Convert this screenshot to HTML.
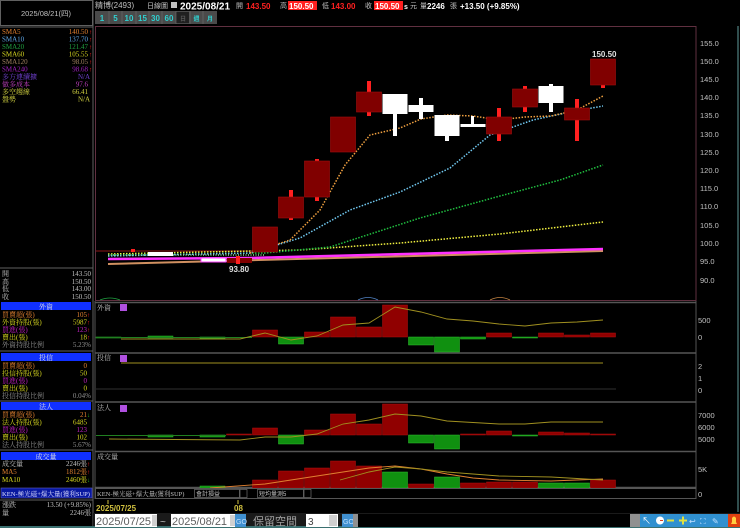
<!DOCTYPE html>
<html><head><meta charset="utf-8"><style>
html,body{margin:0;padding:0;background:#000;}
svg{display:block;font-family:"Liberation Sans","Noto Sans CJK TC",sans-serif;}
</style></head><body>
<svg width="740" height="528" viewBox="0 0 740 528" xmlns="http://www.w3.org/2000/svg">
<rect width="740" height="528" fill="#000"/>
<rect x="0.5" y="0.5" width="92" height="25" fill="#000" stroke="#606060"/>
<text x="46" y="16" fill="#c0c0c0" font-size="7.5" text-anchor="middle">2025/08/21(四)</text>
<line x1="0" y1="27" x2="93" y2="27" stroke="#606060"/>
<line x1="93" y1="0" x2="93" y2="528" stroke="#606060"/>
<g font-size="7" font-family="Liberation Serif,Noto Serif CJK SC,serif">
<text x="2" y="34" fill="#e08030">SMA5</text><text x="88" y="34" fill="#e08030" text-anchor="end">140.50</text>
<text x="2" y="41.5" fill="#60a8e8">SMA10</text><text x="88" y="41.5" fill="#60a8e8" text-anchor="end">137.70</text>
<text x="2" y="49" fill="#20a040">SMA20</text><text x="88" y="49" fill="#20a040" text-anchor="end">121.47</text>
<text x="2" y="56.5" fill="#d8d820">SMA60</text><text x="88" y="56.5" fill="#d8d820" text-anchor="end">105.55</text>
<text x="2" y="64" fill="#a08060">SMA120</text><text x="88" y="64" fill="#a08060" text-anchor="end">98.05</text>
<text x="2" y="71.5" fill="#a020c0">SMA240</text><text x="88" y="71.5" fill="#a020c0" text-anchor="end">98.68</text>
<text x="2" y="79" fill="#7040d0">多方連續擴</text><text x="90" y="79" fill="#7040d0" text-anchor="end">N/A</text>
<text x="2" y="86.5" fill="#c040c0">做多成本</text><text x="88" y="86.5" fill="#c040c0" text-anchor="end">97.6</text>
<text x="2" y="94" fill="#d0d040">多空趨線</text><text x="88" y="94" fill="#d0d040" text-anchor="end">66.41</text>
<text x="2" y="101.5" fill="#d0d040">盤勢</text><text x="90" y="101.5" fill="#d0d040" text-anchor="end">N/A</text>
</g>
<g fill="#ff2020" font-size="6">
<text x="89" y="34">↑</text><text x="89" y="41.5">↑</text><text x="89" y="49">↑</text><text x="89" y="56.5">↑</text><text x="89" y="64">↑</text><text x="89" y="71.5">↑</text>
</g>
<line x1="0" y1="268" x2="93" y2="268" stroke="#606060"/>
<g font-size="7" fill="#c0c0c0" font-family="Liberation Serif,Noto Serif CJK SC,serif">
<text x="2" y="276">開</text><text x="91" y="276" text-anchor="end">143.50</text>
<text x="2" y="284">高</text><text x="91" y="284" text-anchor="end">150.50</text>
<text x="2" y="291">低</text><text x="91" y="291" text-anchor="end">143.00</text>
<text x="2" y="299">收</text><text x="91" y="299" text-anchor="end">150.50</text>
</g>
<g font-size="7" font-family="Liberation Serif,Noto Serif CJK SC,serif">
<rect x="1" y="302" width="90" height="8" fill="#1030ff"/><text x="46" y="309" fill="#e0e0e0" text-anchor="middle">外資</text>
<text x="2" y="317" fill="#e08030">買賣超(張)</text><text x="87" y="317" fill="#e08030" text-anchor="end">105</text>
<text x="2" y="324.5" fill="#d8d820">外資持股(張)</text><text x="87" y="324.5" fill="#d8d820" text-anchor="end">5987</text>
<text x="2" y="332" fill="#c020c0">買進(張)</text><text x="87" y="332" fill="#c020c0" text-anchor="end">123</text>
<text x="2" y="339.5" fill="#d8d820">賣出(張)</text><text x="87" y="339.5" fill="#d8d820" text-anchor="end">18</text>
<text x="2" y="347" fill="#909090">外資持股比例</text><text x="91" y="347" fill="#909090" text-anchor="end">5.23%</text>
<line x1="0" y1="351" x2="93" y2="351" stroke="#606060"/>
<rect x="1" y="353" width="90" height="8" fill="#1030ff"/><text x="46" y="360" fill="#e0e0e0" text-anchor="middle">投信</text>
<text x="2" y="368" fill="#e08030">買賣超(張)</text><text x="87" y="368" fill="#e08030" text-anchor="end">0</text>
<text x="2" y="375.5" fill="#d8d820">投信持股(張)</text><text x="87" y="375.5" fill="#d8d820" text-anchor="end">50</text>
<text x="2" y="383" fill="#c020c0">買進(張)</text><text x="87" y="383" fill="#c020c0" text-anchor="end">0</text>
<text x="2" y="390.5" fill="#d8d820">賣出(張)</text><text x="87" y="390.5" fill="#d8d820" text-anchor="end">0</text>
<text x="2" y="398" fill="#909090">投信持股比例</text><text x="91" y="398" fill="#909090" text-anchor="end">0.04%</text>
<line x1="0" y1="401" x2="93" y2="401" stroke="#606060"/>
<rect x="1" y="402" width="90" height="8" fill="#1030ff"/><text x="46" y="409" fill="#e0e0e0" text-anchor="middle">法人</text>
<text x="2" y="417" fill="#e08030">買賣超(張)</text><text x="87" y="417" fill="#e08030" text-anchor="end">21</text>
<text x="2" y="424.5" fill="#d8d820">法人持股(張)</text><text x="87" y="424.5" fill="#d8d820" text-anchor="end">6485</text>
<text x="2" y="432" fill="#c020c0">買進(張)</text><text x="87" y="432" fill="#c020c0" text-anchor="end">123</text>
<text x="2" y="439.5" fill="#d8d820">賣出(張)</text><text x="87" y="439.5" fill="#d8d820" text-anchor="end">102</text>
<text x="2" y="447" fill="#909090">法人持股比例</text><text x="91" y="447" fill="#909090" text-anchor="end">5.67%</text>
<line x1="0" y1="450" x2="93" y2="450" stroke="#606060"/>
<rect x="1" y="452" width="90" height="8" fill="#1030ff"/><text x="46" y="459" fill="#e0e0e0" text-anchor="middle">成交量</text>
<text x="2" y="466" fill="#c0c0c0">成交量</text><text x="87" y="466" fill="#c0c0c0" text-anchor="end">2246張</text>
<text x="2" y="474" fill="#e08030">MA5</text><text x="87" y="474" fill="#e08030" text-anchor="end">1812張</text>
<text x="2" y="482" fill="#d8d820">MA10</text><text x="87" y="482" fill="#d8d820" text-anchor="end">2460張</text>
</g>
<g fill="#ff2020" font-size="6"><text x="87" y="317">↑</text><text x="87" y="324.5">↑</text><text x="87" y="332">↑</text><text x="87" y="339.5">↑</text><text x="87" y="466">↑</text><text x="87" y="474">↑</text></g>
<g fill="#20c020" font-size="6"><text x="87" y="417">↓</text><text x="87" y="482">↓</text></g>
<rect x="1" y="488" width="91" height="10" fill="#0818a0" stroke="#6060c0" stroke-width="0.6"/>
<text x="2" y="496" fill="#e0e0ff" font-size="6.3" textLength="88" lengthAdjust="spacingAndGlyphs" font-family="Liberation Serif,Noto Serif CJK SC,serif">KEN-極光磁+爆大量(獲利SUP)</text>
<line x1="0" y1="500" x2="93" y2="500" stroke="#606060"/>
<g font-size="7" fill="#c0c0c0" font-family="Liberation Serif,Noto Serif CJK SC,serif">
<text x="2" y="507">漲跌</text><text x="91" y="507" text-anchor="end">13.50 (+9.85%)</text>
<text x="2" y="515">量</text><text x="91" y="515" text-anchor="end">2246張</text>
</g>
<g font-size="8" fill="#c0c0c0">
<text x="95" y="8">精博(2493)</text>
<text x="147" y="8" font-size="7">日線圖</text>
<rect x="171" y="2" width="6" height="6" fill="#c0c0c0"/>
<text x="180" y="9.5" fill="#fff" font-weight="bold" font-size="10">2025/08/21</text>
<text x="236" y="8" font-size="7">開</text><text x="246" y="9" fill="#ff2020" font-weight="bold">143.50</text>
<text x="280" y="8" font-size="7">高</text><rect x="288" y="1" width="29" height="9" fill="#ff2020"/><text x="289" y="9" fill="#fff" font-weight="bold">150.50</text>
<text x="322" y="8" font-size="7">低</text><text x="331" y="9" fill="#ff2020" font-weight="bold">143.00</text>
<text x="365" y="8" font-size="7">收</text><rect x="374" y="1" width="29" height="9" fill="#ff2020"/><text x="375" y="9" fill="#fff" font-weight="bold">150.50</text>
<text x="404" y="9" fill="#fff" font-weight="bold" font-size="7">s</text><text x="410" y="8" font-size="7">元</text>
<text x="420" y="8" font-size="7">量</text><text x="427" y="9" fill="#fff" font-weight="bold">2246</text><text x="450" y="8" font-size="7">張</text>
<text x="460" y="9" fill="#fff" font-weight="bold">+13.50 (+9.85%)</text>
</g>
<g font-size="8" fill="#30d0d0" font-weight="bold" text-anchor="middle">
<rect x="95" y="11" width="122" height="13" fill="#4a4a4a"/>
<rect x="176" y="12" width="13" height="11" fill="#202020"/>
<g stroke="#707070" stroke-width="0.6"><line x1="109" y1="11" x2="109" y2="24"/><line x1="122" y1="11" x2="122" y2="24"/><line x1="136" y1="11" x2="136" y2="24"/><line x1="149" y1="11" x2="149" y2="24"/><line x1="162" y1="11" x2="162" y2="24"/><line x1="176" y1="11" x2="176" y2="24"/><line x1="190" y1="11" x2="190" y2="24"/><line x1="203" y1="11" x2="203" y2="24"/></g>
<text x="102" y="21">1</text><text x="115.5" y="21">5</text><text x="129" y="21">10</text><text x="142.5" y="21">15</text><text x="155.5" y="21">30</text><text x="169" y="21">60</text>
<text x="183" y="21" fill="#555" font-size="6">日</text><text x="196.5" y="21" font-size="6">週</text><text x="210" y="21" font-size="6">月</text>
</g>
<rect x="95.5" y="26.5" width="600.5" height="274" fill="none" stroke="#603040"/>
<line x1="738" y1="26" x2="738" y2="512" stroke="#406868" stroke-width="1.5"/>
<g font-size="7.5" fill="#c0c0c0">
<text x="700" y="46">155.0</text><text x="700" y="64">150.0</text><text x="700" y="82">145.0</text><text x="700" y="100">140.0</text><text x="700" y="118">135.0</text><text x="700" y="137">130.0</text><text x="700" y="155">125.0</text><text x="700" y="173">120.0</text><text x="700" y="191">115.0</text><text x="700" y="209">110.0</text><text x="700" y="228">105.0</text><text x="700" y="246">100.0</text><text x="700" y="264">95.0</text><text x="700" y="283">90.0</text>
</g>
<line x1="96" y1="251" x2="265" y2="251" stroke="#c02020" stroke-width="0.8"/>
<polyline points="108,264 603,251" stroke="#d09060" stroke-width="2" fill="none"/>
<polyline points="108,259 250,258 603,249" stroke="#ff30ff" stroke-width="2.5" fill="none"/>
<polyline points="108,254 300,250 400,243 500,234 603,222" stroke="#f0f040" stroke-width="1.5" stroke-dasharray="1.5 1.5" fill="none"/>
<polyline points="108,255 265,253 330,247 420,218 500,196 560,180 603,165" stroke="#20c040" stroke-width="1.5" stroke-dasharray="1.5 1.5" fill="none"/>
<polyline points="108,256 250,253 300,238 350,210 400,192 450,168 490,135 533,120 570,112 603,106" stroke="#70c8f0" stroke-width="1.5" stroke-dasharray="1.5 1.5" fill="none"/>
<polyline points="250,253 290,240 320,210 345,165 370,135 400,128 421,119 447,115 473,116 499,120 525,117 551,116 577,110 603,96" stroke="#f0a040" stroke-width="1.5" stroke-dasharray="1.5 1.5" fill="none"/>
<line x1="108" y1="255" x2="265" y2="255" stroke="#90d090" stroke-width="1.5" stroke-dasharray="1 1.5"/>
<rect x="131" y="249" width="4" height="3" fill="#ff2020"/>
<rect x="148" y="252" width="25" height="4" fill="#fff"/>
<rect x="201" y="258" width="25" height="4" fill="#fff" stroke="#ff40ff"/>
<rect x="227" y="258" width="25" height="5" fill="#800000"/><rect x="236" y="256" width="4" height="8" fill="#ff2020"/>
<text x="229" y="272" fill="#e0e0e0" font-size="8" font-weight="bold">93.80</text>
<g fill="#800000" stroke="#a01010" stroke-width="0.6">
<rect x="252.5" y="227" width="25" height="25"/>
<rect x="289" y="190" width="4" height="30" fill="#ff2020" stroke="none"/><rect x="278.5" y="197" width="25" height="21"/>
<rect x="315" y="159" width="4" height="42" fill="#ff2020" stroke="none"/><rect x="304.5" y="161" width="25" height="36"/>
<rect x="330.5" y="117" width="25" height="35"/>
<rect x="367" y="81" width="4" height="35" fill="#ff2020" stroke="none"/><rect x="356.5" y="92" width="25" height="20"/>
<rect x="497" y="108" width="4" height="33" fill="#ff2020" stroke="none"/><rect x="486.5" y="117" width="25" height="17"/>
<rect x="523" y="86" width="4" height="26" fill="#ff2020" stroke="none"/><rect x="512.5" y="89" width="25" height="18"/>
<rect x="575" y="99" width="4" height="42" fill="#ff2020" stroke="none"/><rect x="564.5" y="108" width="25" height="12"/>
<rect x="601" y="84" width="4" height="4" fill="#ff2020" stroke="none"/><rect x="590.5" y="59" width="25" height="26"/>
</g>
<g fill="#fff">
<rect x="393" y="94" width="4" height="42"/><rect x="382.5" y="94" width="25" height="20"/>
<rect x="419" y="98" width="4" height="21"/><rect x="408.5" y="105" width="25" height="7"/>
<rect x="445" y="115" width="4" height="26"/><rect x="434.5" y="115" width="25" height="21"/>
<rect x="471" y="116" width="3" height="10"/><rect x="460.5" y="124" width="25" height="3"/>
<rect x="549" y="84" width="4" height="28"/><rect x="538.5" y="86" width="25" height="17"/>
</g>
<text x="592" y="57" fill="#e0e0e0" font-size="8" font-weight="bold">150.50</text>
<path d="M100,300 Q110,296 120,300" stroke="#20a040" fill="none" stroke-width="0.8"/>
<path d="M358,300 Q368,295 378,300" stroke="#5080c0" fill="none" stroke-width="0.8"/>
<path d="M490,300 Q500,295 510,300" stroke="#c08040" fill="none" stroke-width="0.8"/>
<g stroke="#555" stroke-width="1.5" fill="none">
<line x1="95" y1="302.5" x2="696" y2="302.5"/><line x1="95" y1="353" x2="696" y2="353"/><line x1="95" y1="402" x2="696" y2="402"/><line x1="95" y1="451.5" x2="696" y2="451.5"/><line x1="95" y1="487.5" x2="696" y2="487.5"/>
</g>
<line x1="696" y1="301" x2="696" y2="499" stroke="#555"/>
<line x1="95" y1="301" x2="95" y2="499" stroke="#555"/>
<g font-size="7" fill="#c0c0c0" font-family="Liberation Serif,Noto Serif CJK SC,serif">
<text x="97" y="310">外資</text><text x="97" y="360">投信</text><text x="97" y="410">法人</text><text x="97" y="459">成交量</text>
</g>
<g fill="#b050e0"><rect x="120" y="304" width="7" height="7"/><rect x="120" y="355" width="7" height="7"/><rect x="120" y="405" width="7" height="7"/></g>
<g font-size="7.5" fill="#c0c0c0">
<text x="698" y="323">500</text><text x="698" y="340">0</text>
<text x="698" y="369">2</text><text x="698" y="381">1</text><text x="698" y="393">0</text>
<text x="698" y="418">7000</text><text x="698" y="430">6000</text><text x="698" y="442">5000</text>
<text x="698" y="472">5K</text><text x="698" y="497">0</text>
</g>
<g fill="#900000" stroke="#b01010" stroke-width="0.5">
<rect x="252.5" y="330" width="25" height="7"/><rect x="304.5" y="332" width="25" height="5"/><rect x="330.5" y="317" width="25" height="20"/><rect x="356.5" y="327" width="25" height="10"/><rect x="382.5" y="305" width="25" height="32"/><rect x="486.5" y="333" width="25" height="4"/><rect x="538.5" y="333" width="25" height="4"/><rect x="564.5" y="335" width="25" height="2"/><rect x="590.5" y="333" width="25" height="4"/>
</g>
<g fill="#109010" stroke="#30c030" stroke-width="0.5">
<rect x="278.5" y="337" width="25" height="7"/><rect x="408.5" y="337" width="25" height="8"/><rect x="434.5" y="337" width="25" height="15"/><rect x="460.5" y="337" width="25" height="2"/><rect x="512.5" y="337" width="25" height="1"/>
<rect x="96" y="337" width="25" height="1"/><rect x="148" y="336" width="25" height="2"/><rect x="200" y="337" width="25" height="1.5"/>
</g>
<line x1="96" y1="337.5" x2="252" y2="337.5" stroke="#208020" stroke-width="1"/>
<polyline points="121,339 240,339 265,333 291,340 317,336 343,325 369,323 395,307 421,312 447,319 473,321 499,324 525,326 551,323 577,322 603,320" stroke="#a09020" fill="none" stroke-width="0.9"/>
<line x1="121" y1="363" x2="603" y2="363" stroke="#a09020" stroke-width="0.9"/>
<line x1="96" y1="389" x2="616" y2="389" stroke="#404040" stroke-width="0.8"/>
<g fill="#900000" stroke="#b01010" stroke-width="0.5">
<rect x="252.5" y="428" width="25" height="7"/><rect x="304.5" y="430" width="25" height="5"/><rect x="330.5" y="414" width="25" height="21"/><rect x="356.5" y="424" width="25" height="11"/><rect x="382.5" y="404" width="25" height="31"/><rect x="460.5" y="434" width="25" height="1"/><rect x="486.5" y="431" width="25" height="4"/><rect x="538.5" y="432" width="25" height="3"/><rect x="564.5" y="433" width="25" height="2"/><rect x="590.5" y="434" width="25" height="1"/><rect x="226.5" y="434" width="25" height="1"/>
</g>
<g fill="#109010" stroke="#30c030" stroke-width="0.5">
<rect x="278.5" y="435" width="25" height="9"/><rect x="408.5" y="435" width="25" height="8"/><rect x="434.5" y="435" width="25" height="14"/><rect x="512.5" y="435" width="25" height="1"/>
<rect x="148" y="435" width="25" height="2"/><rect x="200" y="435" width="25" height="2"/>
</g>
<line x1="96" y1="435.5" x2="226" y2="435.5" stroke="#208020" stroke-width="1"/>
<polyline points="109,439 240,440 265,437 291,437 317,434 343,424 369,420 395,414 421,416 447,421 499,424 525,424 551,422 603,422" stroke="#a09020" fill="none" stroke-width="0.9"/>
<g fill="#900000" stroke="#b01010" stroke-width="0.5">
<rect x="252.5" y="480" width="25" height="8"/><rect x="278.5" y="471" width="25" height="17"/><rect x="304.5" y="468" width="25" height="20"/><rect x="330.5" y="461" width="25" height="27"/><rect x="356.5" y="466" width="25" height="22"/><rect x="408.5" y="484" width="25" height="4"/><rect x="460.5" y="483" width="25" height="5"/><rect x="486.5" y="482" width="25" height="6"/><rect x="512.5" y="482" width="25" height="6"/><rect x="590.5" y="480" width="25" height="8"/>
</g>
<g fill="#109010" stroke="#30c030" stroke-width="0.5">
<rect x="382.5" y="472" width="25" height="16"/><rect x="434.5" y="477" width="25" height="11"/><rect x="538.5" y="483" width="25" height="5"/><rect x="564.5" y="483" width="25" height="5"/><rect x="200" y="486" width="25" height="2"/>
</g>
<polyline points="210,488 265,484 291,480 317,476 343,472 369,468 395,466 421,469 447,474 473,478 499,480 551,481 603,479" stroke="#e08030" fill="none" stroke-width="0.9"/>
<polyline points="340,480 369,472 395,467 421,469 447,472 499,476 551,477 603,480" stroke="#a09020" fill="none" stroke-width="0.9"/>
<rect x="95.5" y="488.5" width="600.5" height="10" fill="#000" stroke="#555"/>
<text x="97" y="496" fill="#c0c0c0" font-size="6.5" font-family="Liberation Serif,Noto Serif CJK SC,serif">KEN-極光磁+爆大量(獲利SUP)</text>
<rect x="194.5" y="489.5" width="45" height="8" fill="#000" stroke="#808080" stroke-width="0.6"/><text x="196" y="496" fill="#c0c0c0" font-size="6">會計損益</text>
<rect x="240" y="489.5" width="7" height="8" fill="#000" stroke="#808080" stroke-width="0.6"/>
<rect x="257.5" y="489.5" width="46" height="8" fill="#000" stroke="#808080" stroke-width="0.6"/><text x="259" y="496" fill="#c0c0c0" font-size="6">短均量測5</text>
<rect x="304" y="489.5" width="7" height="8" fill="#000" stroke="#808080" stroke-width="0.6"/>
<line x1="108" y1="500" x2="108" y2="504" stroke="#d0c040"/><line x1="238" y1="500" x2="238" y2="504" stroke="#d0c040"/>
<text x="96" y="511" fill="#d0c040" font-size="8" font-weight="bold">2025/07/25</text>
<text x="234" y="511" fill="#d0c040" font-size="8" font-weight="bold">08</text>
<rect x="93" y="513" width="647" height="15" fill="#1a1a1a"/>
<rect x="0" y="526" width="740" height="2" fill="#3a7070"/>
<rect x="95" y="514" width="62" height="13" fill="#fff"/><text x="96" y="525" fill="#606060" font-size="11">2025/07/25</text>
<rect x="152" y="515" width="5" height="11" fill="#d0d0d0"/>
<text x="160" y="525" fill="#c0c0c0" font-size="10">~</text>
<rect x="171" y="514" width="68" height="13" fill="#fff"/><text x="172" y="525" fill="#606060" font-size="11">2025/08/21</text>
<rect x="230" y="515" width="5" height="11" fill="#d0d0d0"/>
<rect x="235" y="514" width="11" height="13" fill="#4090d0"/><text x="236" y="524" fill="#c0e0ff" font-size="7">GO</text>
<text x="253" y="525" fill="#a0a0a0" font-size="11">保留空間</text>
<rect x="306" y="514" width="32" height="13" fill="#fff"/><text x="308" y="525" fill="#404040" font-size="10">3</text>
<rect x="329" y="515" width="8" height="11" fill="#d0d0d0"/>
<rect x="342" y="514" width="11" height="13" fill="#4090d0"/><text x="343" y="524" fill="#c0e0ff" font-size="7">GO</text>
<rect x="353" y="514" width="5" height="13" fill="#909090"/>
<rect x="358" y="514" width="272" height="13" fill="#000"/>
<rect x="630" y="514" width="10" height="13" fill="#909090"/>
<rect x="640" y="514" width="88" height="13" fill="#3090d0"/>
<text x="642" y="524" fill="#fff" font-size="9">↖</text>
<circle cx="660" cy="520.5" r="4" fill="#fff"/><path d="M660,520.5 L663,520.5" stroke="#e04020"/>
<rect x="667" y="519.5" width="7" height="2" fill="#e0e040"/>
<rect x="679" y="519.5" width="8" height="2" fill="#e0e040"/><rect x="682" y="516.5" width="2" height="8" fill="#e0e040"/>
<text x="689" y="524" fill="#c0e0ff" font-size="8">↩</text>
<text x="700" y="524" fill="#c0e0ff" font-size="8">⛶</text>
<text x="712" y="524" fill="#c0e0ff" font-size="8">✎</text>
<rect x="728" y="514" width="12" height="13" fill="#e04010"/><path d="M731,524 L737,524 L736,522 L736,518 Q734,515 732,518 L732,522 Z" fill="#ffd040"/>
</svg>
</body></html>
